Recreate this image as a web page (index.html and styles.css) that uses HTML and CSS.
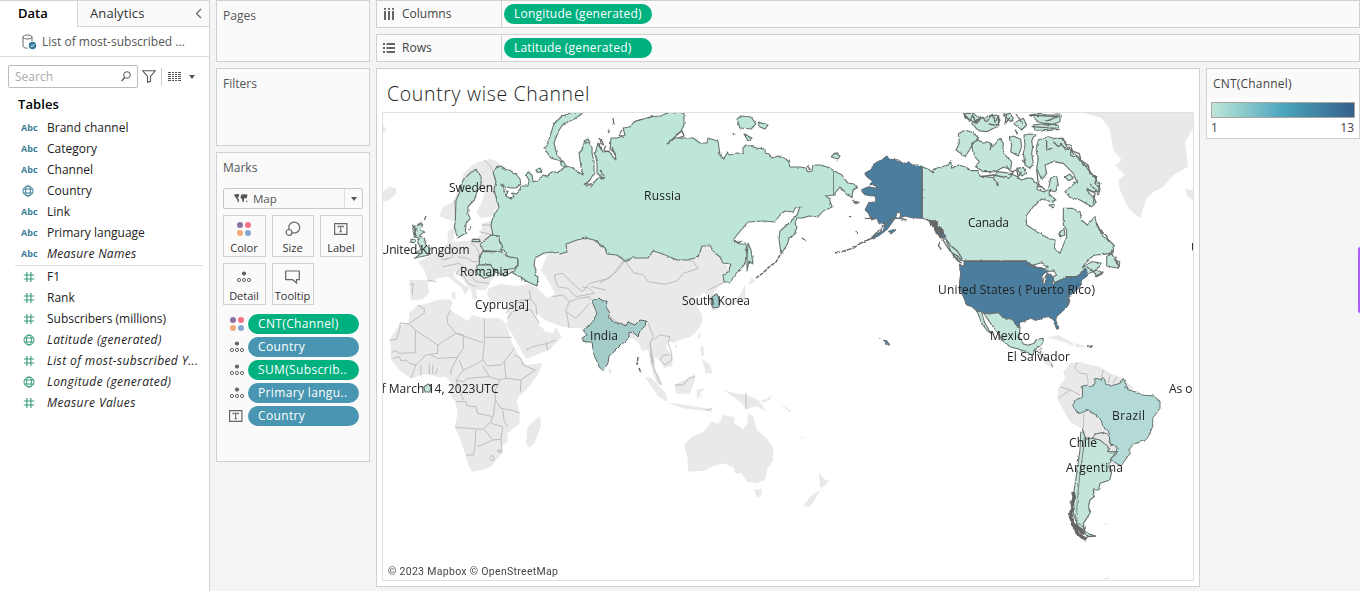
FILE: index.html
```html
<!DOCTYPE html>
<html lang="en">
<head>
<meta charset="utf-8">
<title>Country wise Channel</title>
<link rel="stylesheet" href="styles.css">
</head>
<body>
<svg class="defs" width="0" height="0">
  <defs>
    <symbol id="hash" viewBox="0 0 12 12"><path d="M3.9 1v10M7.9 1v10M.8 4h10.4M.8 8h10.4" fill="none" stroke="currentColor" stroke-width="1.15"/></symbol>
    <symbol id="globe" viewBox="0 0 12 12"><g fill="none" stroke="currentColor"><circle cx="6" cy="6" r="5"/><ellipse cx="6" cy="6" rx="2.4" ry="5"/><path d="M1.3 4h9.4M1.3 8h9.4"/></g></symbol>
    <symbol id="dots4" viewBox="0 0 16 16"><circle cx="4" cy="4" r="3" fill="#8b72a1"/><circle cx="12" cy="4" r="3" fill="#fb7185"/><circle cx="4" cy="12" r="3" fill="#f3a878"/><circle cx="12" cy="12" r="3" fill="#86a8d0"/></symbol>
    <symbol id="detail" viewBox="0 0 16 12"><circle cx="8" cy="2.6" r="2.1" fill="#666"/><g fill="none" stroke="#666"><circle cx="3" cy="9" r="1.6"/><circle cx="8" cy="9" r="1.6"/><circle cx="13" cy="9" r="1.6"/></g></symbol>
    <symbol id="tbox" viewBox="0 0 14 12"><path d="M.6.6h12.3v10.8H.6z" fill="none" stroke="#666" stroke-width="1.2"/><path d="M4.2 4.6V3.3h5v1.3M6.7 3.3v5.4M5.4 8.8H8" fill="none" stroke="#666" stroke-width="1.1"/></symbol>
    <filter id="rough" filterUnits="userSpaceOnUse" x="370" y="100" width="840" height="490">
      <feTurbulence type="fractalNoise" baseFrequency=".25" numOctaves="1" seed="4"/>
      <feDisplacementMap in="SourceGraphic" scale="3" xChannelSelector="R" yChannelSelector="G"/>
    </filter>
  </defs>
</svg>
<div class="app">
  <aside class="data-pane">
    <div class="tabs"><div class="tab active">Data</div><div class="tab other">Analytics<svg width="7" height="11" viewBox="0 0 7 11"><path d="M6 1 1.5 5.5 6 10" fill="none" stroke="#666" stroke-width="1.2"/></svg></div></div>
    <div class="source"><svg width="15" height="16" viewBox="0 0 15 16"><path d="M1 3v9c0 1.3 2 2.2 4.5 2.2M10 3v4M1 3c0-1.1 2-2 4.5-2S10 1.900 10 3s-2 2-4.500 2S1 4.100 1 3" fill="none" stroke="#666"/><circle cx="10.500" cy="11.500" r="3.700" fill="#35799b"/><path d="m8.700 11.500 1.300 1.300 2.400-2.600" fill="none" stroke="#fff"/></svg><span>List of most-subscribed ...</span></div>
    <div class="search-row">
      <div class="search"><span>Search</span><svg width="10" height="11" viewBox="0 0 10 11"><circle cx="6" cy="4" r="3.300" fill="none" stroke="#555"/><path d="M3.700 6.500.600 10" stroke="#555" stroke-width="1.300"/></svg></div>
      <svg class="funnel" width="14" height="13" viewBox="0 0 14 13"><path d="M.8.800h12.400L8.500 6.500v4.800l-3 1V6.500z" fill="none" stroke="#555" stroke-width="1.100"/></svg>
      <i class="vr"></i>
      <svg class="grid-icon" width="13" height="10" viewBox="0 0 13 10"><path d="M0 .5h3m1 0h2m1 0h2m1 0h3M0 2.500h3m1 0h2m1 0h2m1 0h3M0 4.500h3m1 0h2m1 0h2m1 0h3M0 6.500h3m1 0h2m1 0h2m1 0h3M0 8.500h3m1 0h2m1 0h2m1 0h3" stroke="#555" fill="none"/></svg>
      <i class="caret"></i>
    </div>
    <h2>Tables</h2>
    <ul class="fields dims">
      <li><b>Abc</b><span>Brand channel</span></li>
      <li><b>Abc</b><span>Category</span></li>
      <li><b>Abc</b><span>Channel</span></li>
      <li><svg><use href="#globe"/></svg><span>Country</span></li>
      <li><b>Abc</b><span>Link</span></li>
      <li><b>Abc</b><span>Primary language</span></li>
      <li><b>Abc</b><span><em>Measure Names</em></span></li>
    </ul>
    <ul class="fields measures">
      <li><svg><use href="#hash"/></svg><span>F1</span></li>
      <li><svg><use href="#hash"/></svg><span>Rank</span></li>
      <li><svg><use href="#hash"/></svg><span>Subscribers (millions)</span></li>
      <li><svg><use href="#globe"/></svg><span><em>Latitude (generated)</em></span></li>
      <li><svg><use href="#hash"/></svg><span><em>List of most-subscribed Y...</em></span></li>
      <li><svg><use href="#globe"/></svg><span><em>Longitude (generated)</em></span></li>
      <li><svg><use href="#hash"/></svg><span><em>Measure Values</em></span></li>
    </ul>
  </aside>

  <section class="cards">
    <div class="card pages">Pages</div>
    <div class="card filters">Filters</div>
    <div class="card marks">
      <div>Marks</div>
      <div class="mark-type"><svg width="14" height="9" viewBox="0 0 14 9"><path d="M0 .500 3 0l2.500.500L4.500 3l-1 .800.800 1L5.200 6 4 9 3.200 5.500 1.500 3.500zM7 1l1.500-.700L13.500.500 13 3l-1 2-1-1-1 .500V8L8.500 7.500 8 5 6.500 4zM12 6.500l1.500.500-.5 1.300-1-.5z" fill="#555"/></svg><span>Map</span><div class="drop"><i class="caret"></i></div></div>
      <div class="buttons">
        <div><svg width="16" height="16"><use href="#dots4"/></svg>Color</div>
        <div><svg width="16" height="16" viewBox="0 0 16 16"><g fill="none" stroke="#666" stroke-width="1.200"><circle cx="9.200" cy="6.600" r="5.500"/><circle cx="4" cy="11.400" r="2.900" fill="#fafafa"/></g></svg>Size</div>
        <div><svg width="14" height="12"><use href="#tbox"/></svg>Label</div>
        <div><svg width="16" height="12"><use href="#detail"/></svg>Detail</div>
        <div><svg width="15" height="14" viewBox="0 0 15 14"><path d="M.700 1h13.600v8.700H11.500v3.300L7.500 9.700H.700z" fill="none" stroke="#666" stroke-width="1.200"/></svg>Tooltip</div>
      </div>
      <div class="encodings">
        <div><svg width="16" height="16"><use href="#dots4"/></svg><span class="pill green">CNT(Channel)</span></div>
        <div><svg width="16" height="12"><use href="#detail"/></svg><span class="pill blue">Country</span></div>
        <div><svg width="16" height="12"><use href="#detail"/></svg><span class="pill green">SUM(Subscrib..</span></div>
        <div><svg width="16" height="12"><use href="#detail"/></svg><span class="pill blue">Primary langu..</span></div>
        <div><svg width="14" height="12"><use href="#tbox"/></svg><span class="pill blue">Country</span></div>
      </div>
    </div>
  </section>

  <main>
    <div class="shelf"><div class="shelf-name"><svg width="12" height="12" viewBox="0 0 12 12"><path d="M2 0v1.700M6 0v1.700M10 0v1.700M2 3v9M6 3v9M10 3v9" stroke="#666" stroke-width="2"/></svg><span>Columns</span></div><span class="pill green">Longitude (generated)</span></div>
    <div class="shelf"><div class="shelf-name"><svg width="12" height="12" viewBox="0 0 12 12"><path d="M0 2h2M0 6h2M0 10h2M3.500 2H12M3.500 6H12M3.500 10H12" stroke="#666" stroke-width="2"/></svg><span>Rows</span></div><span class="pill green">Latitude (generated)</span></div>
    <div class="work">
      <div class="sheet">
        <h1>Country wise Channel</h1>
        <svg class="map" viewBox="383 113 810 467">
          <!-- Base land -->
          <g class="land">
            <path d="M489 288 500 284 515 286 530 284 537 288 548 298 555 294 550 284 541 270 545 260 550 250 590 232 640 250 700 240 725 262 730 272 724 283 716 289 713 293 717 303 718 309 713 311 709 302 708 296 704 292 700 296 694 297 696 301 701 300 697 306 702 315 702 322 698 330 690 337 680 340 673 343 668 341 666 347 673 357 672 366 664 368 661 361 655 357 655 370 660 377 662 384 658 385 653 374 650 362 648 350 642 351 638 342 630 337 620 335 600 338 585 333 580 328 570 328 560 326 545 320 536 313 529 313 520 328 514 324 507 320 508 308 512 302 498 303 490 301 487 294z"/>
            <path transform="translate(376 110) scale(.33333)" d="M190 318 200 290 232 275 248 235 262 192 285 168 310 155 340 146 365 155 375 170 355 195 368 285 345 320 312 325 302 305 320 270 328 235 310 225 298 250 275 275 265 310 245 335 220 330zM150 445 185 425 215 400 215 365 235 350 236 375 230 395 300 390 315 375 318 340 345 332 350 375 435 450 410 490 360 490 340 520 330 540 300 540 305 570 290 568 285 540 255 500 230 482 238 505 280 535 268 555 255 530 215 500 185 505 155 520 160 550 140 568 105 572 100 510 155 510 145 480 125 455z"/>
            <path transform="translate(376 110) scale(.33333)" d="M20 245 40 230 60 235 62 250 40 270 20 275zM22 45 32 60 20 70zM228 545l10 0 0 25-10-5zM300 580l25 8-25 0z"/>
            <path transform="translate(376 300) scale(.33333)" d="M125 15 150 12 185 0 222-2 230 10 222 30 245 45 275 62 290 45 325 55 370 55 385 65 398 95 408 130 420 150 438 182 455 195 500 188 485 225 455 265 430 288 422 303 432 340 430 370 395 400 395 425 375 440 378 460 345 500 315 510 288 515 278 495 265 455 250 410 236 380 245 340 238 305 222 285 225 250 210 230 190 232 150 222 105 235 75 215 45 180 45 150 42 118 65 80 98 65 100 40zM388 70 410 55 450 20 480 45 490 75 510 95 530 100 540 82 557 110 520 150 450 177 430 140 410 105zM490 348 496 375 475 430 460 443 450 430 455 380zM697 200l12 14-10 8z"/>
            <path transform="translate(580 330) scale(.33333)" d="M195 140 215 145 258 190 262 215 235 200zM260 218 300 222 360 232 400 240 395 245 310 235zM283 165 325 145 345 130 345 150 330 190 290 192zM350 180 378 175 360 188 370 210 358 195 352 212zM360 50 370 48 372 75 365 80zM365 85 390 105 398 130 378 130zM432 180 460 188 500 195 535 210 560 245 530 228 500 238 485 220zM540 213 560 208 575 195 570 210 550 218z"/>
            <path transform="translate(580 330) scale(.33333)" d="M312 345 335 320 370 305 395 275 415 282 430 255 465 262 462 280 490 298 502 280 505 248 520 260 530 300 560 325 580 355 580 390 560 420 555 450 530 460 500 455 485 430 465 430 460 412 430 400 395 410 370 422 325 425 322 380zM522 478 545 478 543 500 530 500zM716 427 732 447 748 453 725 475 720 468zM720 480 710 500 690 530 670 528 690 500zM655 316l20 10-5 2zM590 215l45 28-5 3z"/>
            <path d="M752 277 755 282 748 285zM745 284 745 298 735 304 722 309 735 300 742 292zM699 331l2 5-3 4zM675 344l3 2-3 3z"/>
            <path transform="translate(1000 110) scale(.33333)" d="M250 8 580 8 580 55 555 95 565 170 520 195 490 230 460 245 440 265 420 325 400 310 380 285 360 240 355 210 375 195 345 165 365 150 340 120 330 60 305 25zM555 237l25 5 0 30-20-15zM140 682 175 675 220 700 220 708 190 695zM225 700 255 708 250 713 225 710zM105 710 130 725 135 745 160 765 155 775 125 750z"/>
            <path transform="translate(1020 340) scale(.33333)" d="M45 25 75 45 85 75 130 95 150 70 180 65 200 72 240 80 270 100 310 115 340 145 300 250 260 300 250 330 185 330 190 270 150 245 130 210 112 175 115 145 135 115 130 95 80 75 60 45zM270 360 305 370 300 380 275 378zM248 555l15-5 2 5zM250 715l20-5-10 10z"/>
          </g>
          <!-- Neutral borders -->
          <g class="borders">
            <path transform="translate(376 300) scale(.33333)" d="M125 15 146 28 144 40 98 72 72 69 72 85 62 118 42 120M98 72 118 90 185 135 240 100 215 70 213 50 225 30M118 90 118 158 72 160 58 152 46 158M185 135 185 160 150 165 120 195 100 190 90 180 75 182 70 170 50 175M240 100 262 105 262 145 245 172 185 175 165 165M325 55 325 128 320 180 305 190 262 210 250 180M240 100 320 128M325 112H408M320 180 335 198 375 195 385 185 415 145M385 185 390 235 435 240 478 210 440 195 435 175 415 165M245 172 225 210 225 225M262 210 240 240 262 245 275 235 340 230 320 195M340 230 372 240 390 235M435 240 433 275M105 235 120 195M135 225 135 195M160 222 160 190M170 222 170 195M178 222 185 205M240 305 270 305 272 318 300 320 305 340 350 350 345 365 320 388 238 382M372 240 358 270 358 300 375 325 405 330 430 338M358 300 352 350M380 330 385 365 395 380M300 390 297 440 292 465 270 465M325 388 350 420 375 418 380 380 345 370M305 440 350 420M375 418 378 460M340 475 350 465 355 478 345 482zM365 450l8 0 0 8-8-4zM240 240 262 300"/>
            <path transform="translate(376 110) scale(.33333)" d="M390 610 400 595 435 570 465 568 460 540M395 625 410 605 440 595 465 600 490 640M465 570 480 585 482 615M450 720 470 710 515 700 540 690M510 695 515 720M530 560 560 555 580 575 570 600 580 655M580 575 610 565 640 560 645 570M570 605 600 625 640 580M535 495 560 490 600 530 620 545 640 520 700 505 740 455 750 450M535 495 545 530 575 535 600 560 655 550M655 550 640 535 620 530M645 530 690 540M185 425 200 450 215 445M200 470 225 465 250 460 260 470 240 490M245 440 275 445 290 455 305 455M225 410 230 440 205 450M285 400 300 410 310 430 310 455M240 490 265 500 275 520 300 530M300 480 280 490 300 515 340 520M100 525 112 520 108 555M155 510 180 515M325 150 345 170 355 190M235 270 240 350M318 345 345 345M310 365 350 375"/>
            <path transform="translate(600 110) scale(.33333)" d="M75 452 100 488 130 495 145 515 195 523 230 513 250 490 295 475 280 455 265 450M75 452 50 485 30 500 0 520M30 620 50 635 80 645M145 640 160 680 150 700 155 730 160 760 150 730M160 690 180 675 210 680 205 700 215 730 215 750 195 765 180 750 190 735 210 735M325 540 345 530 370 518M340 555 350 550"/>
            <path transform="translate(580 330) scale(.33333)" d="M210 35 215 95 235 150 245 165M285 165 310 165 325 145 345 140M498 190V238M378 240l18-4"/>
            <path transform="translate(1020 340) scale(.33333)" d="M170 68 165 85 180 100 200 102 205 130M250 90 245 110M270 105 265 130M290 110 280 130M120 140 150 150 180 165M115 175 150 150M192 220 190 265M235 285 240 300 260 305"/>
          </g>
          <!-- Russia -->
          <g class="russia">
            <g filter="url(#rough)">
            <path d="M493 172 496 168 501 166 505 169 509 170 516 174 520 179 521 184 516 188 511 188 504 186 501 183 504 188 504 192 508 191 506 196 511 199 514 196 512 193 517 194 519 190 522 186 528 186 529 180 526 175 528 172 532 175 533 182 539 180 543 175 548 176 553 171 557 173 561 170 566 166 573 168 577 171 583 175 581 167 580 160 579 153 582 150 584 143 588 142 592 147 592 153 594 162 594 173 590 180 584 185 591 187 596 180 599 177 604 179 597 173 597 163 595 154 598 143 603 152 609 151 613 157 616 160 615 153 610 149 611 138 617 138 625 135 623 128 630 127 634 122 640 120 650 117 660 116 670 112 684 112 684 125 681 131 677 135 667 144 675 138 687 138 693 138 700 143 707 143 708 138 714 140 718 141 720 155 724 159 727 152 730 155 737 153 743 154 743 148 746 145 750 146 757 148 765 149 765 153 769 154 772 158 778 156 785 158 789 162 790 167 800 167 806 168 808 172 812 171 813 165 820 165 827 167 833 170 838 173 842 175 846 181 848 183 854 184 857 188 853 190 852 197 847 195 845 192 840 187 835 193 835 195 825 196 829 198 832 207 823 211 818 217 809 216 803 218 797 218 795 224 797 227 794 235 789 238 787 245 781 254 779 239 780 231 787 225 797 215 800 207 796 207 793 212 785 211 780 215 775 222 763 221 748 222 742 229 733 240 740 244 746 244 747 257 744 265 735 276 730 282 724 282 723 275 728 272 731 264 723 263 720 257 715 253 710 246 702 246 700 252 698 257 688 260 677 260 665 255 660 253 653 251 648 258 640 258 632 258 625 261 617 255 607 254 605 248 598 243 594 240 586 238 577 240 566 244 567 252 560 254 552 252 544 253 535 258 534 265 536 270 535 275 538 277 537 286 528 282 513 273 518 265 518 260 508 257 504 250 500 249 502 245 499 240 493 235 491 225 493 217 499 207 496 197 494 189 496 182z"/>
            <path d="M544 148 548 143 551 133 554 124 562 116 574 112 583 113 573 120 563 124 558 132 554 143 557 155 563 162 557 160 551 158zM560 162l3-1 4 6-4-1zM584 141l4-2 2 3-4 1zM536 170l4-2 2 3-5 2zM737 119l4-3 10 1 5 7-5 5-11-1zM758 122l10 3-3 4-5-2zM744 134l8 4-4 3zM831 157l4-4 5 3-2 3zM748 243 751 250 753 264 749 261 747 271 747 260zM472 240l2-1 6 1-1 2z"/>
            <path class="dark" d="M622 130l-3 5 4 2M613 118l1 7M608 129l1 4M602 139l-3 7 3 4M599 138l5 7M606 145l-2 5 5 2M612 147l3 8M676 135l6-4 2 5-6 2M642 119l-8 3M653 115l-5 3M734 240l4 3 4-2M734 133l1 2M807 166l4 4M852 201l6 2M849 216l2 1M856 231l1 3M802 238l4 3M600 170l4 6M584 184l8 0"/>
            </g>
            <path class="thin" d="M833.500 171V195"/>
            <path class="islands" d="M780 255l-4 7-7 5-6 6-7 5"/>
          </g>
          <!-- Marked countries, Europe -->
          <g filter="url(#rough)">
          <g transform="translate(376 110) scale(.33333)" class="c1">
            <path d="M285 187 300 180 316 200 315 225 303 245 295 270 276 290 275 310 283 325 270 340 268 370 245 384 235 350 238 335 240 270 250 250 255 225 265 205z"/>
            <path d="M115 348 140 343 135 360 145 365 130 377 145 385 150 405 163 415 158 435 115 445 135 430 118 430 135 418 125 395 130 385 115 380 110 355zM105 387 118 390 115 398 105 397z"/>
            <path d="M315 400 345 375 370 378 370 395 380 410 375 425 320 422zM320 425 375 425 395 440 425 445 425 465 415 475 385 480 395 490 410 485 385 498 370 490 355 485 345 465 310 465 310 440zM303 465 340 463 358 480 355 495 325 505 303 490zM290 388 310 388 310 395 288 395z"/>
            <path class="dark" d="M108 345 120 358 115 372 122 378M115 348l4 32M150 318 145 330M135 338 125 345M278 360 285 350M150 430 165 432"/>
          </g>
          <path class="india" d="M592 301 599 298 602 301 607 301 606 307 610 313 608 317 614 322 626 326 628 322 635 325 640 320 646 321 645 326 640 331 638 337 634 333 629 332 629 338 622 344 616 350 609 356 608 363 604 370 601 370 594 355 592 342 585 342 582 338 587 335 583 330 588 327 594 320 597 313 594 306z"/>
          </g>
          <path class="islands" d="M638 357l-1 8M639 368l2 5"/>
          <path class="korea" d="M712 297 717 294 720 302 719 307 713 308 711 303z"/>
          <path class="c1" d="M424 387l4-3 3 2-1 6-5 0z"/>
          <!-- North America -->
          <g filter="url(#rough)">
          <g transform="translate(840 110) scale(.33333)">
            <g class="canada">
              <path d="M246 170 270 180 278 188 280 178 300 172 325 165 332 152 335 175 355 165 375 170 395 182 412 182 420 198 460 203 472 185 492 187 510 190 528 198 545 210 560 204 576 205 595 225 590 238 610 245 632 237 630 255 648 270 630 275 605 267 580 290 558 318 560 345 590 365 625 385 645 390 643 415 660 430 668 410 680 380 680 360 670 342 670 295 695 295 720 305 725 330 742 345 765 320 770 345 790 380 820 400 820 412 812 430 790 433 765 435 745 448 725 475 755 455 785 460 770 480 790 490 770 500 762 485 742 490 735 475 725 490 708 500 680 500 645 522 635 495 610 485 580 470 560 453 370 453 355 450 335 430 320 395 300 365 285 335 262 330 246 320z"/>
              <path d="M395 100 415 90 430 100 445 95 460 108 480 85 490 100 488 120 500 140 515 155 512 180 490 172 465 185 430 185 407 170 418 155 400 135zM355 72 375 60 400 68 415 85 400 100 385 125 375 140 348 120 358 100zM508 85 520 78 542 88 545 110 535 138 512 125 515 105zM552 75 572 72 588 75 575 92 578 110 575 130 580 160 570 175 555 165 550 130 555 105zM595 90 625 80 640 85 670 85 680 110 720 145 745 180 780 220 775 245 760 245 740 240 770 275 755 290 720 270 690 262 675 245 710 215 700 190 670 160 640 155 615 165 620 190 605 210 590 175 595 145 588 120zM370 10 400 10 418 25 405 38 380 25zM395 40 415 25 440 20 470 15 480 30 470 50 440 65 415 62zM490 15 510 10 520 25 512 35zM520 40 550 25 560 45 545 60zM570 15 600 10 620 15 660 15 660 35 630 45 595 35zM580 45 620 40 655 45 655 58 620 62 585 60zM530 175 550 172 558 190 545 198zM675 200 690 192 700 205 685 212zM632 205 650 200 655 225 645 245 625 240zM800 440 815 430 825 450 840 455 835 475 800 468zM655 370 672 355 675 375 660 380zM630 285 642 283 640 295z"/>
              <path class="dark" d="M660 100l15 15 20 5-5 15 25 10 15 20 15 5 5 20 20 10-5 20 15 15-5 20M665 85l15 20 10 0 8 18 20 8 5 20 22 15 5 20 15 15 10 20M740 235l25 15-5 30M750 222l20 22M375 15l15 18 8-18 10 25 18-18 15 12 15-22 10 25 10-20 0 30-30-5M500 12l-5 30 15-20M528 12l20 30M570 15l85 5-40 15M575 50l75 5M525 60l8 10M620 90l0 30 15-5M640 95l15 15 10-8M590 180l5 40 10 15M420 200l40-5 50 10 10-20M460 205l15 20M500 170l15 15 15-5 5 20 10-15M740 470l20 15 15-10M765 500l25-15M770 340l10 20 20 18 5 15 15 10M820 412l-5 20M825 440l5 20 10 10M660 365l2 20M450 120l5-20M545 150l12 10M590 230l15 0 10 10"/>
              <path class="water" d="M580 465 605 458 625 470 610 478 590 472zM612 485 642 483 650 495 640 500 635 520 630 495 622 490 610 510 608 530 605 500zM643 518 680 500 684 505 650 525z"/>
            </g>
            <g class="usa">
              <path d="M246 170 235 165 218 165 205 155 190 160 175 150 155 148 140 138 125 150 112 155 98 165 95 178 73 190 80 200 95 212 90 225 108 227 108 235 85 230 63 240 72 253 88 257 105 258 108 272 85 280 75 300 85 310 95 330 110 325 118 342 138 340 130 360 105 375 80 392 115 378 140 360 155 340 165 325 172 310 182 305 180 325 195 318 215 323 246 325 265 330 280 345 295 350 310 370 318 378 312 388 295 370 285 350 260 328 246 322z"/>
              <path d="M358 462 372 470 372 453 560 453 575 465 590 472 610 476 625 485 612 490 605 500 608 525 615 518 620 495 632 492 640 505 637 522 680 502 710 500 725 490 735 475 742 490 742 498 725 510 720 530 705 545 685 560 690 575 682 590 650 620 647 630 657 655 650 658 640 630 630 620 610 622 592 632 572 625 555 632 538 638 540 655 528 645 512 625 500 628 485 618 475 608 445 612 410 603 395 590 380 585 370 560 360 540 358 520 362 490z"/>
              <path d="M38 273l20 5-10 4zM28 317l5 4zM145 365l15-10 8 5-15 12zM115 683l10 3M130 690l10 5 10 8-4 3zM742 710l15-3-2 5z"/>
              <path class="dark" d="M75 325l20 0M60 400l20-8 20-14 20-20 20-20 15-13 25 0 20 5"/>
              <path class="aleutians" d="M-15 429l25-5 30-10 25-16"/>
              <path class="coast" d="M272 332l12 20 12 22 12 10M282 332l12 18 18 22"/>
              <path class="dark" d="M300 395l-5 12 10 12M308 388l12 20 12 18 20 12 14 14M316 385l16 22 20 16 15 24M335 430l18 22 12 8"/>
              <path class="dark" d="M683 545l2 35M560 460l20 12 28 2"/>
            </g>
            <path class="canada" d="M410 603 445 612 475 608 485 618 500 628 512 625 528 645 540 655 537 680 550 702 565 706 582 700 590 688 610 685 607 700 595 712 582 720 580 735 550 722 510 710 485 690 478 675 455 645 432 610 425 610 435 640 455 672 440 660 425 640 418 620zM582 720 600 730"/>
            <path class="thin" d="M604 712 600 733 615 745 625 748 640 770"/>
          </g>
          </g>
          <path class="parallel" d="M964 261.500H1026M922 167V217"/>
          <!-- South America -->
          <g filter="url(#rough)">
          <g transform="translate(1020 340) scale(.33333)">
            <path class="brazil" d="M187 138 205 135 212 140 225 130 225 115 243 118 248 112 255 120 257 133 275 138 300 130 310 115 320 138 325 150 355 158 365 165 400 168 420 183 420 205 398 235 398 260 385 290 375 302 345 310 330 325 330 340 303 378 273 360 290 340 295 325 270 310 268 285 265 272 250 260 240 235 218 218 205 210 180 220 165 210 158 195 170 178 188 172z"/>
            <path class="c1" d="M187 265 193 285 200 298 215 295 240 300 265 318 263 335 290 335 270 360 265 378 275 395 270 420 240 430 235 450 220 450 223 470 210 480 205 500 212 515 200 535 190 550 195 575 225 588 205 590 175 565 160 520 158 480 170 400 180 330 182 280z"/>
            <path class="thin" d="M193 290 190 330 180 400 175 450 172 480 170 520 165 525 175 550 190 558V585"/>
            <path class="paraguay" d="M218 295 225 283 235 280 250 277 262 283 268 290 270 312 290 320 292 335 265 335 265 320 240 300z"/>
            <path class="fjords" d="M158 456l5 15-6 20 2 15-7 12 4 20 2 15 8 10 5 15 14 12 14 8M150 525l8 25 15 15 20 15"/>
            <path class="dark" d="M195 578l8 12 25-2M170 540l5 20 15 10 0 15M220 462l5-4M313 140l12 8"/>
          </g>
          </g>
          <!-- Labels -->
          <g class="labels">
            <text x="449" y="192" textLength="44">Sweden</text>
            <text x="644" y="200" textLength="37">Russia</text>
            <text x="380.500" y="254" textLength="89">United Kingdom</text>
            <text x="460" y="276" textLength="49">Romania</text>
            <text x="475" y="309" textLength="54">Cyprus[a]</text>
            <text x="682" y="305" textLength="68">South Korea</text>
            <text x="590" y="340" textLength="28">India</text>
            <text x="381.500" y="393" textLength="117">f March 14, 2023UTC</text>
            <text x="968" y="227" textLength="41">Canada</text>
            <text x="938" y="294" textLength="157">United States ( Puerto Rico)</text>
            <text x="990" y="340" textLength="40">Mexico</text>
            <text x="1007" y="361" textLength="63">El Salvador</text>
            <text x="1112" y="420" textLength="33">Brazil</text>
            <text x="1069" y="447" textLength="28">Chile</text>
            <text x="1066" y="472" textLength="57">Argentina</text>
            <text x="1169" y="393" textLength="23.500">As o</text>
            <text x="1191" y="252">U</text>
            <text class="credit" x="388" y="575" textLength="170">© 2023 Mapbox © OpenStreetMap</text>
          </g>
        </svg>
      </div>
      <div class="legend">
        <div class="legend-title">CNT(Channel)</div>
        <div class="ramp"></div>
        <div class="range"><span>1</span><span>13</span></div>
      </div>
    </div>
  </main>
  <div class="side-handle"></div>
</div>
</body>
</html>
```
FILE: styles.css
```css
* { box-sizing: border-box; }
body { margin: 0; background: #f4f4f4; color: #333; font: 12px/16px "Open Sans", "Noto Sans", sans-serif; overflow: hidden; }
.defs { position: absolute; }
.app { position: relative; display: flex; gap: 6px; height: 591px; }
ul { margin: 0; padding: 0; list-style: none; }
svg { display: block; flex: none; }

.data-pane { width: 210px; background: #fff; border-right: 1px solid #d0d0d0; border-top: 1px solid #d4d4d4; }
.tabs { display: flex; height: 26px; font-size: 13px; line-height: 25px; }
.tab.active { width: 77px; padding-left: 18px; font-weight: 600; color: #000; }
.tab.other { flex: 1; display: flex; align-items: center; justify-content: space-between; padding: 0 7px 1px 12px; background: #fafafa; border-left: 1px solid #d4d4d4; border-bottom: 1px solid #d4d4d4; letter-spacing: .1px; }
.source { display: flex; align-items: center; gap: 5px; height: 30px; padding-left: 22px; border-bottom: 1px solid #ddd; color: #555; white-space: nowrap; }
.search-row { display: flex; align-items: center; padding: 8px 0 0 8px; }
.search { display: flex; align-items: center; justify-content: space-between; width: 130px; height: 23px; padding: 0 6px; border: 1px solid #bbb; border-radius: 2px; color: #aaa; }
.funnel { margin-left: 4px; }
.vr { width: 1px; height: 18px; margin: 0 6px 0 5px; background: #ccc; }
.grid-icon { margin-right: 8px; }
.caret { border: 3.5px solid transparent; border-top: 4.5px solid #555; border-bottom: 0; }
h2 { margin: 8px 0 5px 18px; font-size: 13px; line-height: 16px; font-weight: 600; color: #000; letter-spacing: .1px; }
.fields li { display: flex; align-items: center; height: 21px; }
.fields li > :first-child { width: 12px; height: 12px; margin: 0 12px 0 23px; }
.dims li > svg:first-child { margin: 0 13px 0 22px; }
.fields li > b:first-child { width: 26px; height: auto; margin: 0 0 0 21px; font-size: 9px; font-weight: 700; }
.fields span { white-space: nowrap; }
.fields em { letter-spacing: .4px; }
.dims em { letter-spacing: .3px; }
.dims { color: #3d7f99; height: 149px; margin: 0 6px 0 0; background: linear-gradient(#ddd, #ddd) 15px 100% / 100% 1px no-repeat; }
.measures { color: #3a9c78; }
.dims span, .measures span { color: #222; }

.cards { display: flex; flex-direction: column; gap: 6px; width: 154px; }
.card { background: #fafafa; border: 1px solid #d0d0d0; padding: 7px 6px; color: #555; }
.pages { height: 62px; }
.filters { height: 78px; }
.marks { height: 310px; }
.mark-type { display: flex; align-items: center; height: 21px; margin-top: 12px; padding-left: 10px; border: 1px solid #c8c8c8; border-radius: 2px; font-size: 11.500px; gap: 5px; }
.drop { margin-left: auto; width: 18px; height: 19px; border-left: 1px solid #ddd; display: grid; place-items: center; }
.buttons { display: grid; grid-template-columns: 43px 42px 43px; column-gap: 6px; row-gap: 6px; margin-top: 6px; }
.buttons > div { height: 42px; display: flex; flex-direction: column; align-items: center; border: 1px solid #d0d0d0; font-size: 11px; line-height: 14px; color: #333; padding: 25px 1px 0 0; }
.buttons svg { height: 16px; margin: -20px 0 4px; }
.encodings { margin-top: 9px; }
.encodings > div { display: flex; align-items: center; height: 20px; margin-bottom: 3px; padding-left: 6px; }
.encodings svg { margin-right: auto; }
.encodings .pill { width: 111px; margin-right: 4px; letter-spacing: .35px; }
.pill { height: 20px; border-radius: 10px; padding-left: 10px; color: #fff; line-height: 20px; white-space: nowrap; font-weight: 500; letter-spacing: .2px; }
.green { background: #00b180; }
.blue { background: #4996b2; }

main { flex: 1; min-width: 0; display: flex; flex-direction: column; gap: 6px; }
.shelf { display: flex; align-items: center; height: 28px; background: #fafafa; border: 1px solid #d0d0d0; }
.shelf-name { display: flex; align-items: center; gap: 7px; width: 125px; height: 26px; padding-left: 6px; border-right: 1px solid #d0d0d0; color: #444; }
.shelf .pill { width: 148px; margin-left: 2px; }
.work { display: flex; gap: 6px; align-items: flex-start; }
.sheet { width: 824px; height: 519px; background: #fff; border: 1px solid #d0d0d0; padding: 0 5px; }
h1 { margin: 0; height: 43px; padding-left: 5px; font-size: 19.5px; line-height: 50px; font-weight: 300; color: #222; letter-spacing: .65px; }
.map { width: 812px; height: 469px; border: 1px solid #e0e0e0; }
.legend { width: 154px; height: 71px; background: #fff; border: 1px solid #d0d0d0; color: #444; }
.legend-title { height: 29px; padding: 7px 6px; background: #fafafa; letter-spacing: .2px; }
.ramp { height: 16px; margin: 4px; border: 1px solid #aaa69c; background: linear-gradient(90deg, #bfe6d9, #4ba5bd 50%, #35608c); }
.range { display: flex; justify-content: space-between; margin-top: -2px; padding: 0 5px 0 4px; }
.side-handle { position: absolute; right: 0; top: 247px; width: 2px; height: 66px; background: #ad5cff; border-radius: 2px 0 0 2px; }

.map path { vector-effect: non-scaling-stroke; stroke-linejoin: round; }
.land { fill: #e9e9e9; }
.borders { fill: none; stroke: #b8b8b8; stroke-width: .9; }
.russia { fill: #bde5d9; stroke: #67736f; stroke-width: 1.1; }
.c1, .canada { fill: #c4e5db; stroke: #67736f; stroke-width: 1.1; }
.usa { fill: #4b7e9e; stroke: #66696c; stroke-width: 1; }
.brazil { fill: #b4dad7; stroke: #67736f; }
.india { fill: #a4ccc9; stroke: #5d6665; }
.korea { fill: #9acbca; stroke: #5d6665; }
.water { fill: #fff; }
.map .thin, .map .islands, .map .coast, .map .fjords, .map .aleutians { fill: none; }
.thin { stroke: #727775; stroke-width: .9; }
.dark { fill: none; stroke: #686c6b; stroke-width: 1.3; }
.paraguay { fill: #e6e6e6; stroke: #67736f; }
.parallel { fill: none; stroke: #66696c; }
.islands { stroke: #666; stroke-width: 1.5; stroke-dasharray: 4 1; }
.aleutians { stroke: #666; stroke-width: 1.6; stroke-dasharray: 5 1; }
.coast { stroke: #666; stroke-width: 3.5; }
.fjords { stroke: #666; stroke-width: 3.5; }
.labels { font-size: 12px; fill: #222; }
.labels .credit { font: 10.500px Roboto, sans-serif; fill: #444; }
```
